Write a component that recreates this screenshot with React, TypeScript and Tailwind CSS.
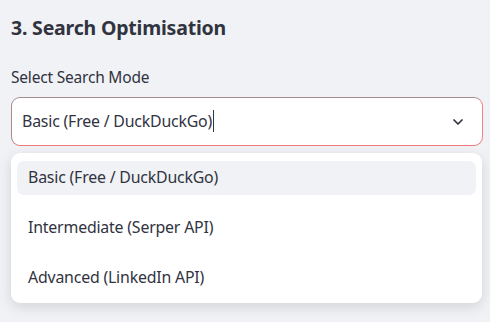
const options = [
  "Basic (Free / DuckDuckGo)",
  "Intermediate (Serper API)",
  "Advanced (LinkedIn API)",
];

function Chevron() {
  return (
    <svg width="16" height="16" viewBox="0 0 24 24" fill="none">
      <path
        d="M6 9l6 6 6-6"
        stroke="#31333f"
        strokeWidth="2.6"
        strokeLinecap="round"
        strokeLinejoin="round"
      />
    </svg>
  );
}

export default function App() {
  return (
    <div
      className="w-[504px] h-[336px] bg-white overflow-hidden"
      style={{ fontFamily: '"Noto Sans", "Open Sans", sans-serif' }}
    >
      <div className="w-[490px] h-[322px] bg-[#f0f2f6] pl-[11px] pr-[7px] pt-[14px] text-[#31333f]">
        <h3 className="text-[19.5px] font-bold leading-[28px] tracking-[-0.2px]">
          3. Search Optimisation
        </h3>
        <div className="mt-[24px] text-[15.5px] leading-[22px] tracking-[-0.2px]">
          Select Search Mode
        </div>
        <div className="mt-[9px] h-[49px] bg-white rounded-[9px] border border-t-[#a58c91] border-l-[#ac8a90] border-r-[#f08484] border-b-[#f07878] flex items-center justify-between pl-[10px] pr-[16px]">
          <div className="flex items-center text-[15.9px] tracking-[-0.2px]">
            <span>{options[0]}</span>
            <span className="w-px h-[22px] bg-[#31333f] ml-px" />
          </div>
          <Chevron />
        </div>
        <div className="mt-[7px] w-[471px] bg-white rounded-[9px] shadow-[0_4px_14px_rgba(0,0,0,0.13)] px-[6px] pt-[8px] pb-[8px]">
          {options.map((o, i) => (
            <div
              key={o}
              className={`h-[34px] flex items-center px-[11px] rounded-[7px] text-[15.9px] tracking-[-0.2px] ${
                i === 0 ? "bg-[#f0f2f6]" : ""
              } ${i > 0 ? "mt-[16px]" : ""}`}
            >
              {o}
            </div>
          ))}
        </div>
      </div>
    </div>
  );
}
